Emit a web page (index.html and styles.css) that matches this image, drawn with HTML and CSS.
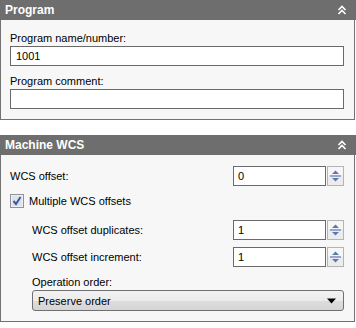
FILE: index.html
```html
<!DOCTYPE html>
<html lang="en">
<head>
    <meta charset="UTF-8">
    <title>Program settings</title>
    <link rel="stylesheet" href="styles.css">
</head>
<body>
    <!-- Program -->
    <div class="panel">
        <div class="panel-head">
            <span>Program</span>
            <svg class="collapse" width="10" height="10" viewBox="0 0 10 10">
                <path d="M1.5 5 L5 1.5 L8.5 5 M1.5 9 L5 5.5 L8.5 9" fill="none" stroke="#fff" stroke-width="1.6"/>
            </svg>
        </div>
        <div class="panel-body">
            <div class="field-label">Program name/number:</div>
            <div class="text-box">1001</div>
            <div class="field-label gap">Program comment:</div>
            <div class="text-box"></div>
        </div>
    </div>

    <!-- Machine WCS -->
    <div class="panel">
        <div class="panel-head">
            <span>Machine WCS</span>
            <svg class="collapse" width="10" height="10" viewBox="0 0 10 10">
                <path d="M1.5 5 L5 1.5 L8.5 5 M1.5 9 L5 5.5 L8.5 9" fill="none" stroke="#fff" stroke-width="1.6"/>
            </svg>
        </div>
        <div class="panel-body">
            <div class="row">
                <span>WCS offset:</span>
                <div class="spin">
                    <div class="text-box">0</div>
                    <svg class="spin-btn" width="17" height="20" viewBox="0 0 17 20">
                        <rect x="0.5" y="0.5" width="16" height="19" fill="#ececec" stroke="#b4b4b4"/>
                        <rect x="1" y="1" width="15" height="8" fill="#f6f6f6"/>
                        <path d="M5 8 L12 8 L8.5 4.5 Z" fill="#5a78b4"/>
                        <path d="M3 9.5 H14 M3 10.5 H14" stroke="#9aa8c6"/>
                        <path d="M5 12 L12 12 L8.5 15.5 Z" fill="#5a78b4"/>
                    </svg>
                </div>
            </div>
            <label class="check-row">
                <svg class="check" width="14" height="14" viewBox="0 0 14 14">
                    <rect x="0.5" y="0.5" width="13" height="13" fill="#eef0f4" stroke="#8f9296"/>
                    <rect x="2" y="2" width="10" height="10" fill="#dde2ea"/>
                    <path d="M3.5 7 L6 10 L10.5 3" fill="none" stroke="#3c5a9c" stroke-width="2"/>
                </svg>
                <span>Multiple WCS offsets</span>
            </label>
            <div class="indent">
                <div class="row">
                    <span>WCS offset duplicates:</span>
                    <div class="spin">
                        <div class="text-box">1</div>
                        <svg class="spin-btn" width="17" height="20" viewBox="0 0 17 20">
                            <rect x="0.5" y="0.5" width="16" height="19" fill="#ececec" stroke="#b4b4b4"/>
                            <rect x="1" y="1" width="15" height="8" fill="#f6f6f6"/>
                            <path d="M5 8 L12 8 L8.5 4.5 Z" fill="#5a78b4"/>
                            <path d="M3 9.5 H14 M3 10.5 H14" stroke="#9aa8c6"/>
                            <path d="M5 12 L12 12 L8.5 15.5 Z" fill="#5a78b4"/>
                        </svg>
                    </div>
                </div>
                <div class="row next">
                    <span>WCS offset increment:</span>
                    <div class="spin">
                        <div class="text-box">1</div>
                        <svg class="spin-btn" width="17" height="20" viewBox="0 0 17 20">
                            <rect x="0.5" y="0.5" width="16" height="19" fill="#ececec" stroke="#b4b4b4"/>
                            <rect x="1" y="1" width="15" height="8" fill="#f6f6f6"/>
                            <path d="M5 8 L12 8 L8.5 4.5 Z" fill="#5a78b4"/>
                            <path d="M3 9.5 H14 M3 10.5 H14" stroke="#9aa8c6"/>
                            <path d="M5 12 L12 12 L8.5 15.5 Z" fill="#5a78b4"/>
                        </svg>
                    </div>
                </div>
                <div class="field-label gap">Operation order:</div>
                <div class="select">
                    <span>Preserve order</span>
                    <svg width="9" height="6" viewBox="0 0 9 6">
                        <path d="M0 0.5 H9 L4.5 5.5 Z" fill="#000"/>
                    </svg>
                </div>
            </div>
        </div>
    </div>
</body>
</html>
```

FILE: styles.css
```css
body {
    margin: 0;
    font-family: Tahoma, 'Liberation Sans', sans-serif;
    font-size: 11px;
    color: #000;
    background: #fff;
}

.panel + .panel {
    margin-top: 15px;
}

.panel-head {
    height: 20px;
    background: #6e6e6e;
    color: #fff;
    font-weight: bold;
    font-size: 12px;
    display: flex;
    align-items: center;
    justify-content: space-between;
    padding: 0 9px 0 5px;
}

.panel-body {
    margin-right: 1px;
    background: #f7f7f7;
    border: 1px solid #727272;
    border-top: 0;
    padding: 11px 10px 10px 9px;
}

.field-label {
    line-height: 14px;
    margin-bottom: 1px;
}

.field-label.gap {
    margin-top: 8px;
}

.text-box {
    height: 18px;
    line-height: 18px;
    border: 1px solid #6a6a6a;
    background: #fff;
    padding: 0 5px;
}

.row {
    display: flex;
    align-items: center;
    justify-content: space-between;
    height: 20px;
}

.row.next {
    margin-top: 7px;
}

.spin {
    display: flex;
    width: 111px;
}

.spin .text-box {
    flex: 1;
    padding: 0 4px;
}

.spin-btn {
    display: block;
    margin-left: 1px;
}

.check-row {
    display: flex;
    align-items: center;
    gap: 5px;
    height: 16px;
    margin: 7px 0 11px;
}

.check {
    display: block;
}

.indent {
    padding-left: 22px;
}

.select {
    height: 19px;
    margin-top: 1px;
    border: 1px solid #707070;
    border-radius: 3px;
    background: linear-gradient(#f3f3f3, #ebebeb 50%, #dddddd 51%, #d5d5d5);
    display: flex;
    align-items: center;
    justify-content: space-between;
    padding: 0 7px 0 5px;
}

.select svg {
    display: block;
}
```
